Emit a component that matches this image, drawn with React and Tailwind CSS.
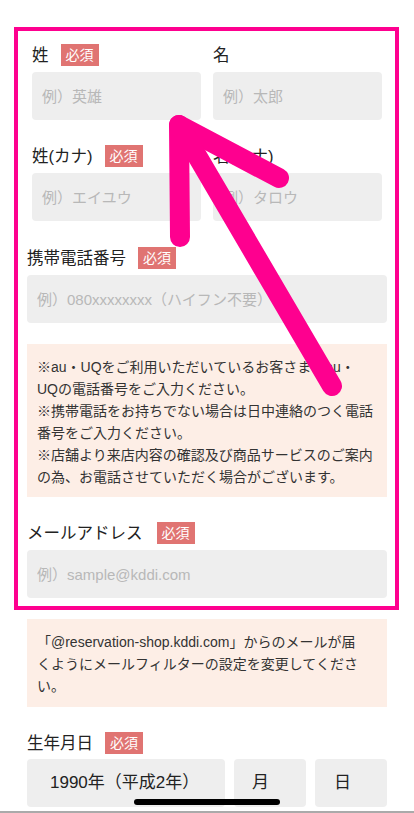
import React from 'react';

const font = "font-['Liberation_Sans','Noto_Sans_CJK_JP',sans-serif]";

// Required badge
const Required = ({ gap = 'ml-3' }) => (
  <span className={`${gap} inline-block h-[22px] px-[5px] bg-[#e07472] text-white text-[14px] leading-[22px]`}>
    必須
  </span>
);

const Label = ({ children, required = true, gap }) => (
  <div className="flex items-center h-[22px]">
    <span className="text-[16.5px] leading-[22px] text-[#222]">{children}</span>
    {required && <Required gap={gap} />}
  </div>
);

const Field = ({ placeholder }) => (
  <input
    type="text"
    placeholder={placeholder}
    className="mt-[6px] w-full h-12 px-[10px] rounded-[4px] bg-[#eeeeee] text-[15px] text-[#333] placeholder:text-[#b8b8b8] outline-none"
  />
);

const Note = ({ children, className = '' }) => (
  <div className={`bg-[#fdeee6] px-[10px] pt-[12px] pb-[9px] text-[14px] leading-[22px] text-[#333] ${className}`}>
    {children}
  </div>
);

export default function App() {
  return (
    <div className={`relative w-[414px] h-[813px] overflow-hidden bg-white ${font}`}>
      <div className="px-[27px] pt-[44px]">
        {/* 姓 / 名 */}
        <div className="grid grid-cols-2 gap-3 px-[5px]">
          <div>
            <Label>姓</Label>
            <Field placeholder="例）英雄" />
          </div>
          <div>
            <Label required={false}>名</Label>
            <Field placeholder="例）太郎" />
          </div>
        </div>

        <div className="grid grid-cols-2 gap-3 px-[5px] mt-[25px]">
          <div>
            <Label>姓(カナ)</Label>
            <Field placeholder="例）エイユウ" />
          </div>
          <div>
            <Label required={false}>名(カナ)</Label>
            <Field placeholder="例）タロウ" />
          </div>
        </div>

        <div className="mt-[26px]">
          <Label>携帯電話番号</Label>
          <Field placeholder="例）080xxxxxxxx（ハイフン不要）" />
        </div>

        <Note className="mt-[21px]">
          ※au・UQをご利用いただいているお客さまはau・<br />
          UQの電話番号をご入力ください。<br />
          ※携帯電話をお持ちでない場合は日中連絡のつく電話<br />
          番号をご入力ください。<br />
          ※店舗より来店内容の確認及び商品サービスのご案内<br />
          の為、お電話させていただく場合がございます。
        </Note>

        <div className="mt-[25px]">
          <Label gap="ml-[14px]">メールアドレス</Label>
          <Field placeholder="例）sample@kddi.com" />
        </div>

        <Note className="mt-[21px] pt-[11px] pb-[10px]">
          「@reservation-shop.kddi.com」からのメールが届<br />
          くようにメールフィルターの設定を変更してくださ<br />
          い。
        </Note>

        <div className="mt-[25px]">
          <Label>生年月日</Label>
          <div className="mt-[5px] grid grid-cols-[1fr_72px_72px] gap-[9px] text-[17px] text-[#222]">
            <div className="h-12 rounded-[4px] bg-[#eeeeee] flex items-center pl-[23px]">1990年（平成2年）</div>
            <div className="h-12 rounded-[4px] bg-[#eeeeee] flex items-center pl-[18px]">月</div>
            <div className="h-12 rounded-[4px] bg-[#eeeeee] flex items-center pl-[19px]">日</div>
          </div>
        </div>
      </div>

      {/* annotation frame */}
      <div className="absolute left-[14px] top-[27px] w-[385px] h-[583px] border-4 border-[#fe008f] pointer-events-none" />

      {/* annotation arrow */}
      <svg className="absolute inset-0 pointer-events-none" width="414" height="813" viewBox="0 0 414 813">
        <g fill="none" stroke="#fe008f" strokeWidth="20" strokeLinecap="round" strokeLinejoin="round">
          <polyline points="180,237 179,125 279,178" />
          <line x1="179" y1="125" x2="332" y2="386" />
        </g>
      </svg>

      {/* home indicator */}
      <div className="absolute left-[134px] top-[799px] w-[146px] h-[6px] rounded-full bg-black" />
      <div className="absolute left-0 right-0 top-[811px] h-[2px] bg-[#aaaaaa]" />
    </div>
  );
}
